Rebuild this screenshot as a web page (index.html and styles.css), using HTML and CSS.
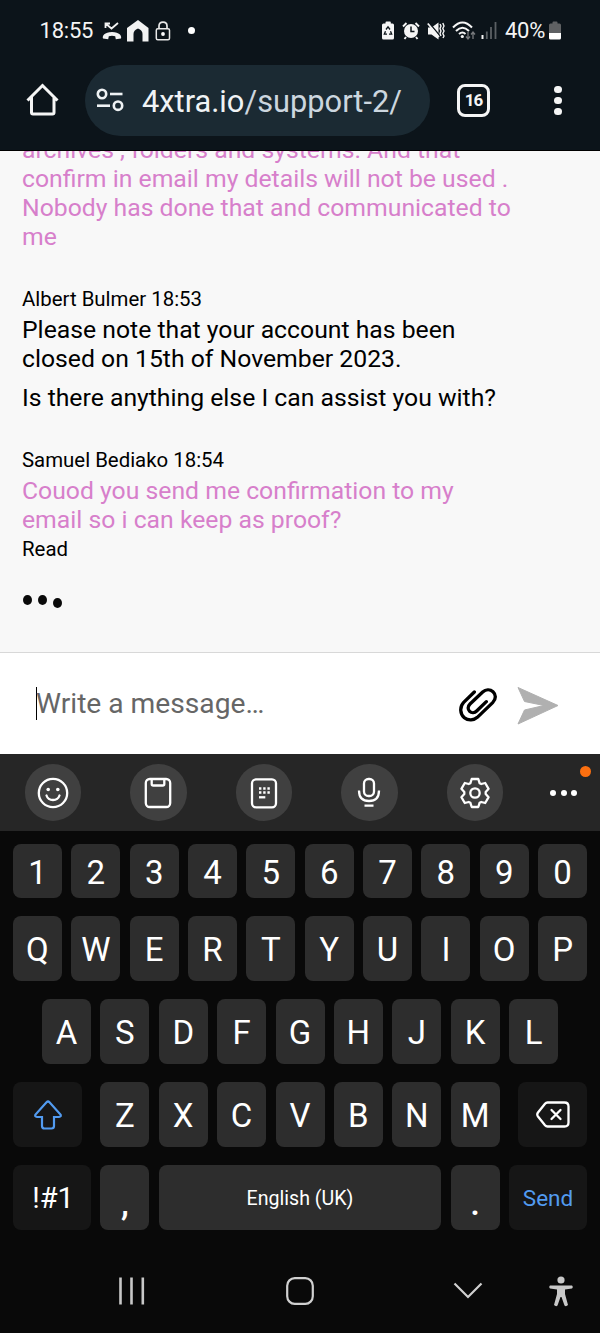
FILE: index.html
```html
<!DOCTYPE html>
<html lang="en">
<head>
  <meta charset="UTF-8" />
  <meta name="viewport" content="width=device-width, initial-scale=1.0" />
  <title>Support chat</title>
  <link rel="stylesheet" href="styles.css">
</head>
<body>
  <div class="phone">

    <header class="browser">
      <div class="status-bar">
        <span class="time">18:55</span>
        <svg class="missed" width="20" height="20" viewBox="0 0 20 20">
          <path d="M3.500 7V2.500H8M3.500 2.500L9.500 7.500L16 2" fill="none" stroke="#f2f2f2" stroke-width="1.800"/>
          <path d="M1 17.500C0 15 2.500 11 10 11S20 15 19 17.500L13.800 18.300L13.200 15.200Q10 14.200 6.800 15.200L6.200 18.300Z" fill="#f2f2f2"/>
        </svg>
        <svg class="house" width="22" height="22" viewBox="0 0 22 22">
          <path d="M0 8L11 0L21.500 8V21.500H15.500V14Q15.500 10 11 8.500Q6.500 10 6.500 14V21.500H0Z" fill="#f2f2f2"/>
        </svg>
        <svg class="lock" width="16" height="20" viewBox="0 0 16 20">
          <path d="M4 8V5Q4 1.200 8 1.200T12 5V8" fill="none" stroke="#e8e8e8" stroke-width="1.700"/>
          <rect x="1.300" y="7.800" width="13.200" height="11" rx="1.500" fill="none" stroke="#e8e8e8" stroke-width="1.500"/>
          <circle cx="8" cy="13" r="1.900" fill="#fff"/>
        </svg>
        <span class="dot"></span>

        <div class="status-right">
          <svg class="recycle" width="12" height="19" viewBox="0 0 12 19">
            <path d="M3.500 1.500Q3.500 .5 4.500 .5H8Q8.800 .5 8.800 1.500V2.500H10.500Q12 2.500 12 4V17Q12 18.500 10.500 18.500H1.500Q0 18.500 0 17V4Q0 2.500 1.500 2.500H3.500Z" fill="#f5f5f5"/>
            <path d="M4 8.500L6 5.800L8 8.500M8.500 10.200L9.700 13.200H7M5 13.200H2.300L3.500 10.200" fill="none" stroke="#0c141a" stroke-width="1.300"/>
          </svg>
          <svg class="alarm" width="18" height="18" viewBox="0 0 18 18">
            <circle cx="9" cy="9" r="7" fill="#f5f5f5"/>
            <path d="M1 4.500L4.500 1M13.500 1L17 4.500M4 15L2.500 17M14 15L15.500 17" stroke="#f5f5f5" stroke-width="1.900"/>
            <path d="M9 4.500V9.500H12.500" fill="none" stroke="#0c141a" stroke-width="1.500"/>
          </svg>
          <svg class="mute" width="18" height="18" viewBox="0 0 18 18">
            <path d="M1 5.500H4.500L11.500 .5V17.500L4.500 12.500H1Z" fill="#f5f5f5"/>
            <path d="M2.200 1L13 14" stroke="#0c141a" stroke-width="1.500"/>
            <path d="M.8 1.500L12 15" stroke="#f5f5f5" stroke-width="1.700"/>
            <path d="M13 2L14 4L13 6.500L14 9L13 11.500L14 14M15.800 1L17 4L15.800 6.500L17 9L15.800 11.500L17 14L16 16" fill="none" stroke="#f5f5f5" stroke-width="1.400"/>
          </svg>
          <svg class="wifi" width="24" height="20" viewBox="0 0 24 20">
            <path d="M1 6.500Q10.500 -3.500 20 6.500M4 10Q10.500 3.500 17 10M7 13Q10.500 10 13.500 13" fill="none" stroke="#f5f5f5" stroke-width="2"/>
            <circle cx="10.300" cy="15.500" r="1.600" fill="#f5f5f5"/>
            <path d="M16 11V17.500M14 15.500L16 18L18 15.500M21 18V11.500M19 13.500L21 11L23 13.500" fill="none" stroke="#77797c" stroke-width="1.300"/>
          </svg>
          <svg class="signal" width="16" height="17" viewBox="0 0 16 17">
            <path d="M1.500 13V17" stroke="#f5f5f5" stroke-width="2"/>
            <path d="M5.800 9.500V17M10 5V17M14.500 0V17" stroke="#5b6064" stroke-width="1.800"/>
          </svg>
          <span class="percent">40%</span>
          <svg class="battery" width="12" height="19" viewBox="0 0 12 19">
            <path d="M3.500 1.500Q3.500 .5 4.500 .5H7.500Q8.500 .5 8.500 1.500V2.500H10.500Q12 2.500 12 4V12H0V4Q0 2.500 1.500 2.500H3.500Z" fill="#5f6163"/>
            <path d="M0 12H12V17Q12 18.500 10.500 18.500H1.500Q0 18.500 0 17Z" fill="#fff"/>
          </svg>
        </div>
      </div>

      <div class="address-bar">
        <svg class="home" width="34" height="34" viewBox="0 0 34 34">
          <path d="M1.500 17.500L16.500 2.500L31.500 17.500M5.500 14V29.500Q5.500 31 7 31H26.500Q28 31 28 29.500V14" fill="none" stroke="#f5f5f5" stroke-width="3"/>
        </svg>
        <div class="url">
          <svg width="28" height="25" viewBox="0 0 28 25" fill="none" stroke="#eef2f4" stroke-width="2.600">
            <circle cx="6" cy="6" r="4.200"/>
            <path d="M14 6H26.500"/>
            <circle cx="22" cy="17.700" r="4.200"/>
            <path d="M1 17.700H14"/>
          </svg>
          <span class="address">4xtra.io<span class="path">/support-2/</span></span>
        </div>
        <div class="tabs">16</div>
        <div class="menu"><i></i><i></i><i></i></div>
      </div>
    </header>

    <main class="chat">
      <p class="message mine">archives , folders and systems. And that<br>confirm in email my details will not be used .<br>Nobody has done that and communicated to<br>me</p>

      <p class="name">Albert Bulmer 18:53</p>
      <p class="message">Please note that your account has been<br>closed on 15th of November 2023.</p>
      <p class="message more">Is there anything else I can assist you with?</p>

      <p class="name">Samuel Bediako 18:54</p>
      <p class="message mine">Couod you send me confirmation to my<br>email so i can keep as proof?</p>
      <p class="read">Read</p>

      <div class="typing"><i></i><i></i><i></i></div>
    </main>

    <div class="composer">
      <span class="caret"></span>
      <span class="placeholder">Write a message…</span>
      <svg class="clip" width="39" height="35" viewBox="0 0 117 105">
        <path d="M46 12L14 43C1 57 3 78 16 89C28 99 45 97 55 88L101 44C112 33 111 19 102 11C93 3 80 4 71 12L33 48C26 55 26 64 32 70C38 76 47 75 53 69L82 41" fill="none" stroke="#000" stroke-width="10" stroke-linecap="round"/>
      </svg>
      <svg class="send" width="42" height="39" viewBox="0 0 42 39">
        <path d="M1 1.500L41 19.500L1 38L7.500 24L27 19.500L7.500 15.500Z" fill="#b0b0b0" stroke="#b0b0b0" stroke-width="1" stroke-linejoin="round"/>
      </svg>
    </div>

    <section class="keyboard">
      <div class="tools">
        <span class="tool">
          <svg width="32" height="32" viewBox="-16 -16 32 32" fill="none" stroke="#fff" stroke-width="2.300">
            <circle r="14.200"/>
            <path d="M-6.500 2.500Q-5 7 0 7T6.500 2.500" stroke-linecap="round"/>
            <circle cx="-4.800" cy="-3.500" r="1.800" fill="#fff" stroke="none"/>
            <circle cx="4.800" cy="-3.500" r="1.800" fill="#fff" stroke="none"/>
          </svg>
        </span>
        <span class="tool">
          <svg width="32" height="32" viewBox="-16 -16 32 32" fill="none" stroke="#fff" stroke-width="2.300">
            <rect x="-12.200" y="-14" width="24.400" height="28" rx="4"/>
            <path d="M-6.300 -14V-9Q-6.300 -7.500 -4.800 -7.500H4.800Q6.300 -7.500 6.300 -9V-14"/>
          </svg>
        </span>
        <span class="tool">
          <svg width="32" height="32" viewBox="-16 -16 32 32" fill="none" stroke="#fff" stroke-width="2.300">
            <rect x="-12" y="-13.700" width="24" height="28" rx="4"/>
            <path d="M-5 -4.500H6M-5 -.5H6" stroke-width="2.400" stroke-dasharray="2.400 1.800"/>
            <path d="M-5 4.300H1.300"/>
          </svg>
        </span>
        <span class="tool">
          <svg width="32" height="32" viewBox="-16 -16 32 32" fill="none" stroke="#fff" stroke-width="2.300">
            <rect x="-5" y="-14" width="10" height="17" rx="4.500"/>
            <path d="M-10 -2.500Q-10 8 0 8T10 -2.500M-4.500 12.700H4.500"/>
          </svg>
        </span>
        <span class="tool">
          <svg width="32" height="32" viewBox="-16 -16 32 32" fill="none" stroke="#fff" stroke-width="2.300" stroke-linejoin="round">
            <path d="M-3.300 -14H3.300L4.600 -9.800L6.300 -9L10.200 -10L13.600 -4.200L10.700 -1V1L13.600 4.200L10.200 10L6.300 9L4.600 9.800L3.300 14H-3.300L-4.600 9.800L-6.300 9L-10.200 10L-13.600 4.200L-10.700 1V-1L-13.600 -4.200L-10.200 -10L-6.300 -9L-4.600 -9.800Z"/>
            <circle r="4.700"/>
          </svg>
        </span>
        <span class="dots"><i></i><i></i><i></i><b class="badge"></b></span>
      </div>

      <div class="keys">
        <div class="row numbers">
          <span class="key">1</span><span class="key">2</span><span class="key">3</span><span class="key">4</span><span class="key">5</span><span class="key">6</span><span class="key">7</span><span class="key">8</span><span class="key">9</span><span class="key">0</span>
        </div>
        <div class="row">
          <span class="key">Q</span><span class="key">W</span><span class="key">E</span><span class="key">R</span><span class="key">T</span><span class="key">Y</span><span class="key">U</span><span class="key">I</span><span class="key">O</span><span class="key">P</span>
        </div>
        <div class="row">
          <span class="key">A</span><span class="key">S</span><span class="key">D</span><span class="key">F</span><span class="key">G</span><span class="key">H</span><span class="key">J</span><span class="key">K</span><span class="key">L</span>
        </div>
        <div class="row spread">
          <span class="key fn shift">
            <svg width="30" height="30" viewBox="0 0 30 30">
              <path d="M13.500 2.200Q15 .8 16.500 2.200L27.500 14.500Q28.500 16.800 26 17H21V26Q21 28.500 18.500 28.500H11.500Q9 28.500 9 26V17H4Q1.500 16.800 2.500 14.500Z" fill="none" stroke="#529bf0" stroke-width="2.200"/>
            </svg>
          </span>
          <div class="row">
            <span class="key">Z</span><span class="key">X</span><span class="key">C</span><span class="key">V</span><span class="key">B</span><span class="key">N</span><span class="key">M</span>
          </div>
          <span class="key fn delete">
            <svg width="34" height="27" viewBox="0 0 34 27" fill="none" stroke="#fff" stroke-width="2.300">
              <path d="M11.500 1.500H28.500Q32.500 1.500 32.500 5.500V21.500Q32.500 25.500 28.500 25.500H11.500Q10 25.500 9 24.300L2 15.500Q.5 13.500 2 11.500L9 2.700Q10 1.500 11.500 1.500Z"/>
              <path d="M15.500 9L24.500 18M24.500 9L15.500 18" stroke-linecap="round"/>
            </svg>
          </span>
        </div>
        <div class="row">
          <span class="key fn symbols">!#1</span>
          <span class="key comma">,</span>
          <span class="key space">English (UK)</span>
          <span class="key period">.</span>
          <span class="key fn enter">Send</span>
        </div>
      </div>
    </section>

    <nav class="nav-bar">
      <svg class="recents" width="26" height="28" viewBox="0 0 26 28">
        <path d="M1.500 .5V27.500M12.500 .5V27.500M23.800 .5V27.500" stroke="#c8c8c8" stroke-width="2.600"/>
      </svg>
      <svg class="home-btn" width="28" height="28" viewBox="0 0 28 28">
        <rect x="1.200" y="1.200" width="25.600" height="25.600" rx="7.500" fill="none" stroke="#d0d0d0" stroke-width="2.200"/>
      </svg>
      <svg class="back" width="30" height="18" viewBox="0 0 30 18">
        <path d="M1.500 1.500L15 15L28.500 1.500" fill="none" stroke="#d0d0d0" stroke-width="2.200"/>
      </svg>
      <svg class="access" width="24" height="31" viewBox="0 0 24 31">
        <circle cx="12" cy="4" r="3.600" fill="#c8c8c8"/>
        <path d="M1 9.500H23Q24.500 11 23 12.500L16 13.500V18L19 29Q17 31 15.500 29.500L12.500 21H11.500L8.500 29.500Q7 31 5 29L8 18V13.500L1 12.500Q-.5 11 1 9.500Z" fill="#c8c8c8"/>
      </svg>
    </nav>

  </div>
</body>
</html>
```

FILE: styles.css
```css
* {
  box-sizing: border-box;
}
body {
  margin: 0;
  font-family: Roboto, "Liberation Sans", sans-serif;
  background-color: #090909;
}
svg {
  display: block;
  flex-shrink: 0;
}
p {
  margin: 0;
}
.phone {
  width: 600px;
  height: 1333px;
  display: flex;
  flex-direction: column;
  overflow: hidden;
}

/* browser header */
.browser {
  height: 151px;
  flex-shrink: 0;
  background-color: #0c141a;
  color: #f5f5f5;
  border-bottom: 1px solid #000;
}
.status-bar {
  height: 61px;
  padding-left: 39.5px;
  display: flex;
  align-items: center;
  font-size: 22px;
}
.time {
  width: 62.5px;
  letter-spacing: -0.2px;
}
.house {
  margin-left: 4.5px;
}
.lock {
  margin-left: 6px;
}
.dot {
  width: 7px;
  height: 7px;
  margin-left: 17px;
  border-radius: 50%;
  background-color: #fff;
}
.status-right {
  margin-left: auto;
  margin-right: 39px;
  display: flex;
  align-items: center;
}
.alarm {
  margin-left: 8.5px;
}
.mute {
  margin-left: 7px;
}
.wifi {
  margin-left: 7px;
}
.signal {
  margin-left: 5px;
}
.percent {
  width: 43px;
  margin-left: 8px;
  letter-spacing: -0.3px;
}
.battery {
  margin-left: 1px;
}
.address-bar {
  height: 78px;
  padding-left: 26px;
  display: flex;
  align-items: center;
}
.url {
  width: 345px;
  height: 71px;
  margin-left: 25px;
  padding-left: 11px;
  border-radius: 36px;
  background-color: #1b2a33;
  display: flex;
  align-items: center;
}
.address {
  margin-left: 18px;
  padding-top: 2px;
  font-size: 30.8px;
  color: #f0f3f5;
  white-space: nowrap;
}
.path {
  color: #ccd6df;
}
.tabs {
  width: 33px;
  height: 33px;
  margin-left: 27px;
  border: 3px solid #f5f5f5;
  border-radius: 8px;
  font-size: 17px;
  font-weight: bold;
  letter-spacing: -1px;
  line-height: 27px;
  text-align: center;
}
.menu {
  margin-left: 64px;
  padding-top: 1px;
  display: flex;
  flex-direction: column;
  gap: 3.5px;
}
.menu i {
  width: 7.5px;
  height: 7.5px;
  border-radius: 50%;
  background-color: #f5f5f5;
}

/* conversation */
.chat {
  height: 501px;
  flex-shrink: 0;
  padding-left: 22px;
  background-color: #f8f8f8;
  color: #000;
  overflow: hidden;
  display: flex;
  flex-direction: column;
  justify-content: flex-end;
}
.message {
  flex-shrink: 0;
  font-size: 24.75px;
  line-height: 29px;
  white-space: nowrap;
}
.mine {
  color: #d77fcb;
}
.name {
  margin-top: 37px;
  margin-bottom: 5px;
  font-size: 20.4px;
  line-height: 22px;
}
.more {
  margin-top: 10px;
}
.read {
  margin-top: 4px;
  font-size: 20.4px;
  line-height: 22px;
}
.typing {
  height: 59px;
  flex-shrink: 0;
  margin-top: 33px;
  padding-left: 1px;
  display: flex;
  gap: 6px;
}
.typing i {
  width: 9px;
  height: 10px;
  margin-top: 2px;
  border-radius: 50%;
  background-color: #0a0a0a;
}
.typing i:last-child {
  margin-top: 5px;
}

.composer {
  height: 102px;
  flex-shrink: 0;
  padding-left: 36px;
  border-top: 1px solid #d8d8d8;
  background-color: #fff;
  display: flex;
  align-items: center;
}
.caret {
  width: 1px;
  height: 33px;
  background-color: #000;
}
.placeholder {
  width: 423px;
  margin-left: -1px;
  font-size: 28.2px;
  color: #666;
}
.clip {
  margin-top: 4px;
}
.send {
  margin-left: 19px;
  margin-top: 3px;
}

/* keyboard */
.keyboard {
  flex-shrink: 0;
  color: #fff;
}
.tools {
  height: 77px;
  padding-left: 24.5px;
  background-color: #262626;
  display: flex;
  align-items: center;
  gap: 49px;
}
.tool {
  width: 56.5px;
  height: 56.5px;
  border-radius: 50%;
  background-color: #404040;
  display: flex;
  align-items: center;
  justify-content: center;
}
.dots {
  position: relative;
  display: flex;
  gap: 4.5px;
  margin-left: -2px;
}
.dots i {
  width: 6px;
  height: 6px;
  border-radius: 50%;
  background-color: #fff;
}
.badge {
  position: absolute;
  top: -24px;
  right: -14px;
  width: 11px;
  height: 11px;
  border-radius: 50%;
  background-color: #fb6f10;
}
.keys {
  padding: 13px 13px 0;
  display: flex;
  flex-direction: column;
  gap: 18px;
}
.row {
  display: flex;
  justify-content: center;
  gap: 9.4px;
}
.spread {
  justify-content: space-between;
  gap: 0;
}
.key {
  width: 49px;
  height: 65px;
  border-radius: 8px;
  background-color: #2d2d2d;
  font-size: 33px;
  display: flex;
  align-items: center;
  justify-content: center;
  padding-top: 2px;
}
.numbers .key {
  height: 54px;
}
.fn {
  background-color: #161616;
}
.shift,
.delete {
  width: 69px;
  padding-top: 0;
}
.symbols,
.enter {
  width: 78px;
}
.symbols {
  font-size: 29px;
  padding-top: 0;
  padding-left: 2px;
}
.enter {
  font-size: 22.5px;
  color: #529bf0;
  padding-top: 1px;
}
.space {
  flex: 1;
  font-size: 19.6px;
  padding-top: 2px;
}
.comma,
.period {
  font-size: 35px;
  font-weight: 500;
  padding-top: 11px;
}

/* system navigation */
.nav-bar {
  flex: 1;
  margin-top: 19px;
  padding: 0 27px 0 119px;
  display: flex;
  align-items: center;
}
.home-btn {
  margin-left: 140.5px;
}
.back {
  margin-left: 139px;
}
.access {
  margin-left: auto;
}
```
